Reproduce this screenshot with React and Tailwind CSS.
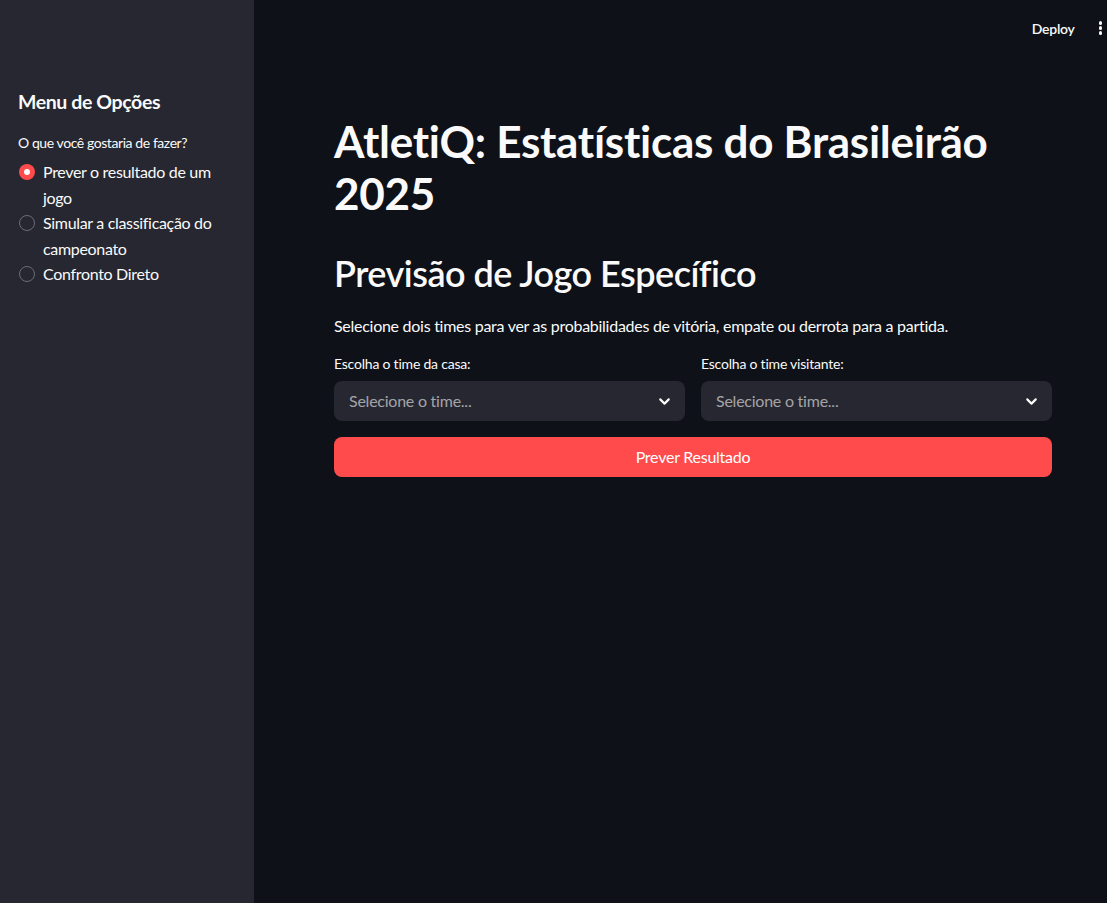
import { ChevronDown } from 'lucide-react';

const options = [
  { label: 'Prever o resultado de um jogo', checked: true },
  { label: 'Simular a classificação do campeonato', checked: false },
  { label: 'Confronto Direto', checked: false },
];

function Radio({ checked }) {
  return checked ? (
    <span className="mt-[5px] flex h-4 w-4 shrink-0 items-center justify-center rounded-full bg-[#ff4b4b]">
      <span className="h-1.5 w-1.5 rounded-full bg-white" />
    </span>
  ) : (
    <span className="mt-[5px] h-4 w-4 shrink-0 rounded-full border border-[#6b6c75]" />
  );
}

function TeamSelect({ label }) {
  return (
    <div className="flex flex-1 flex-col">
      <label className="mb-[6px] text-[14px] leading-[22px] tracking-[-0.015em] text-[#fafafa]">{label}</label>
      <div className="flex h-10 items-center justify-between rounded-lg bg-[#262730] pl-[15px] pr-[12px]">
        <span className="text-[16px] tracking-[-0.015em] text-[#fafafa]/60">Selecione o time...</span>
        <ChevronDown size={17} strokeWidth={3} className="text-[#fafafa]" />
      </div>
    </div>
  );
}

export default function App() {
  return (
    <div
      className="flex h-[903px] w-full bg-[#0e1117] text-[#fafafa]"
      style={{ fontFamily: '"Source Sans Pro", Lato, "Noto Sans", sans-serif' }}
    >
      {/* Sidebar */}
      <aside className="w-[254px] shrink-0 bg-[#262730] px-[18px] pt-[89px]">
        <h3 className="text-[19.5px] font-bold leading-[26px] tracking-[-0.02em]">Menu de Opções</h3>
        <p className="mt-[17px] text-[14px] leading-[22px] tracking-[-0.03em]">O que você gostaria de fazer?</p>
        <div className="mt-[5px] flex flex-col">
          {options.map((o) => (
            <div key={o.label} className="flex gap-[8px] pl-[1px]">
              <Radio checked={o.checked} />
              <span className="w-[175px] text-[16px] leading-[25.6px] tracking-[-0.02em]">{o.label}</span>
            </div>
          ))}
        </div>
      </aside>

      {/* Main */}
      <main className="flex flex-1 flex-col">
        <header className="flex h-[56px] items-center justify-end gap-[24px] pr-[5px]">
          <span className="text-[14px] font-semibold tracking-[-0.02em]">Deploy</span>
          <span className="flex flex-col gap-[1.5px]">
            <span className="h-[3.5px] w-[3.5px] rounded-full bg-[#fafafa]" />
            <span className="h-[3.5px] w-[3.5px] rounded-full bg-[#fafafa]" />
            <span className="h-[3.5px] w-[3.5px] rounded-full bg-[#fafafa]" />
          </span>
        </header>
        <div className="ml-[80px] w-[718px] pt-[59px]">
          <h1 className="text-[44px] font-bold leading-[52px] tracking-[-0.006em]">
            AtletiQ: Estatísticas do Brasileirão 2025
          </h1>
          <h2 className="mt-[31px] text-[36px] font-semibold leading-[46px] tracking-[-0.014em]">
            Previsão de Jogo Específico
          </h2>
          <p className="mt-[17px] text-[16px] leading-[26px] tracking-[-0.017em]">
            Selecione dois times para ver as probabilidades de vitória, empate ou derrota para a partida.
          </p>
          <div className="mt-[14px] flex gap-4">
            <TeamSelect label="Escolha o time da casa:" />
            <TeamSelect label="Escolha o time visitante:" />
          </div>
          <button className="mt-4 flex h-10 w-full items-center justify-center rounded-lg bg-[#ff4b4b] text-[16px] tracking-[-0.015em] text-white">
            Prever Resultado
          </button>
        </div>
      </main>
    </div>
  );
}
